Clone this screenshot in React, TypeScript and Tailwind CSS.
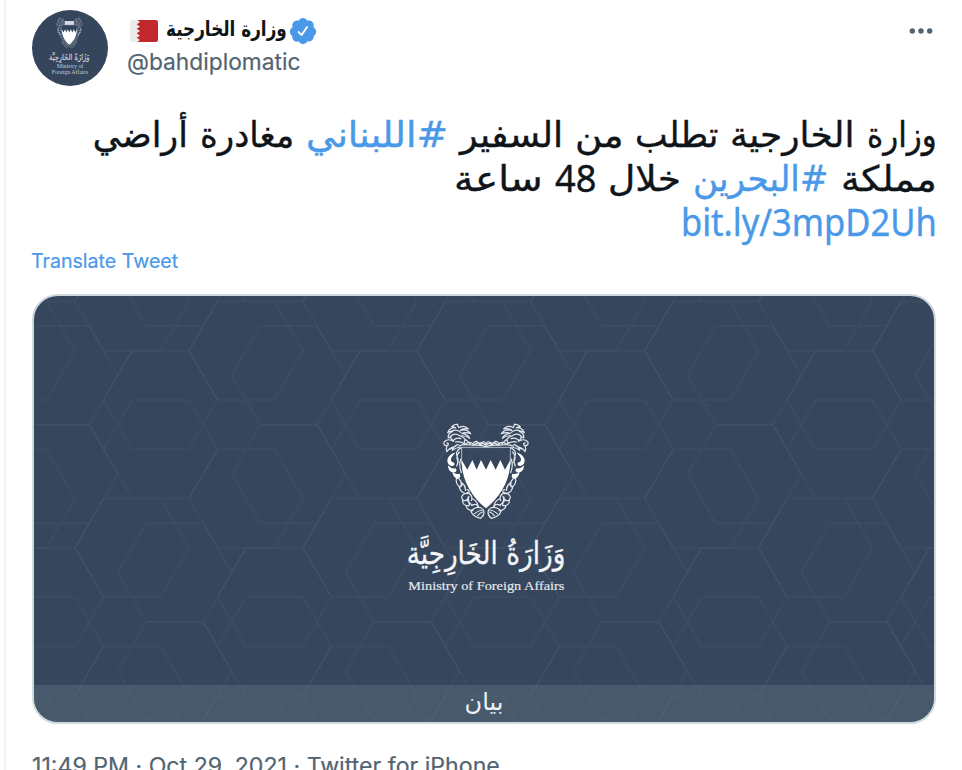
import { useLayoutEffect, useRef, useState } from 'react';
import clsx from 'clsx';

const BADGE_PATH =
  'M22.5 12.5c0-1.58-.875-2.95-2.148-3.6.154-.435.238-.905.238-1.4 0-2.21-1.71-3.998-3.818-3.998-.47 0-.92.084-1.336.25C14.818 2.415 13.51 1.5 12 1.5s-2.816.917-3.437 2.25c-.415-.165-.866-.25-1.336-.25-2.11 0-3.818 1.79-3.818 4 0 .494.083.964.237 1.4-1.272.65-2.147 2.018-2.147 3.6 0 1.495.782 2.798 1.942 3.486-.02.17-.032.34-.032.514 0 2.21 1.708 4 3.818 4 .47 0 .92-.086 1.335-.25.62 1.334 1.926 2.25 3.437 2.25 1.512 0 2.818-.916 3.437-2.25.415.163.865.248 1.336.248 2.11 0 3.818-1.79 3.818-4 0-.174-.012-.344-.033-.513 1.158-.687 1.943-1.99 1.943-3.484zm-6.616-3.334l-4.334 6.5c-.145.217-.382.334-.625.334-.143 0-.288-.04-.416-.126l-.115-.094-2.415-2.415c-.293-.293-.293-.768 0-1.06s.768-.294 1.06 0l1.77 1.767 3.825-5.74c.23-.345.696-.436 1.04-.207.346.23.44.696.21 1.04z';

// Hexagon motif on a grid of half-steps; it repeats every (16, 0) and (8, 8) cells
const CELL_W = 14.24;
const CELL_H = 24.64;

const FAINT: number[][] = [
  [12, 0, 18, 0], [-1, 1, 3, 1], [7, 1, 11, 1], [4, 2, 10, 2],
  [6, 4, 10, 4], [12, 4, 16, 4], [15, 5, 19, 5], [6, 6, 10, 6], [12, 6, 16, 6],
  [2, 0, 5, 3], [13, -1, 10, 2], [10, 0, 8, 2], [16, 0, 18, 2, 16, 4],
  [15, 1, 13, 3, 15, 5, 13, 7, 15, 9], [6, 2, 3, 5, 6, 8], [4, 4, 6, 6],
  [10, 2, 12, 4, 10, 6], [10, 4, 12, 6, 10, 8], [6, 4, 4, 6], [16, 6, 18, 8],
];

const BRIGHT: number[][] = [
  [3, 1, 4, 2], [12, 0, 10, 2, 12, 4], [12, 6, 10, 8], [4, 4, 6, 2],
  [3, 5, 5, 7], [15, 5, 19, 5], [6, 2, 8, 2],
];

const OFFSETS = [-1, 0, 1, 2].flatMap((row) =>
  [-2, -1, 0, 1, 2, 3, 4].map((col) => [col * 16 + (row % 2 === 0 ? 0 : 8), row * 8])
);

const toPath = (lines: number[][]) =>
  lines
    .map((pts) => {
      let d = '';
      for (let i = 0; i < pts.length; i += 2) {
        d += `${i === 0 ? 'M' : 'L'}${(pts[i] * CELL_W).toFixed(2)} ${(pts[i + 1] * CELL_H).toFixed(2)}`;
      }
      return d;
    })
    .join('');

function HexPattern() {
  return (
    <svg className="absolute inset-0" width="900" height="426" viewBox="34 296 900 426" fill="none">
      {OFFSETS.map(([x, y]) => (
        <g key={`${x}:${y}`} transform={`translate(${46.6 + x * CELL_W} ${301.4 + y * CELL_H})`}>
          <path d={toPath(FAINT)} stroke="#8c9bb2" strokeOpacity="0.075" strokeWidth="2" />
          <path d={toPath(BRIGHT)} stroke="#8c9bb2" strokeOpacity="0.065" strokeWidth="1.8" />
        </g>
      ))}
    </svg>
  );
}

// Left half of the mantling, mirrored for the right one
function Mantling() {
  return (
    <>
      <g strokeWidth="3.6">
        <path d="M202 44c-6-3-14 3-17 6 5-1 9 1 12 4-9-3-20 3-24 14 5-4 11-5 15-4-9 3-14 11-13 20l8-4c-1 6 2 10 8 12" />
        <path d="M202 42l4 11c12-7 23-3 29 4-9-2-18-1-24 4 12-3 24 1 31 10-10-4-19-4-27-1 10 1 20 6 24 15-9-7-19-9-29-7 7 2 13 6 16 11" />
        <path d="M184 64c12-7 20-5 28 3M181 79c9-8 19-8 28-2M190 91c7-7 14-8 22-5" />
        <path d="M190 94c-9-7-20-6-27 1-4 7 1 13 8 12 6-2 5-9-1-8M171 108c-3 6-3 12 0 17 5-9 15-13 24-15M177 118c11-2 18-9 27-15M196 107c-5 5-8 9-9 14 8-6 16-9 24-10" />
        <path d="M196 96c11-3 20 0 30 7 10-9 20-5 26 1 10-8 22-7 36 1M205 108c14-6 28-4 42-3 14 1 25-2 41 5M226 103c-5-5-4-10 1-14 5 3 8 9 13 12M248 106c1-8 6-12 13-12 2 6 7 9 13 10M270 103c3-6 8-9 14-7l4 9" />
        <path d="M214 113c-14 6-18 18-12 28 4 10 2 18-2 27M208 126c-9 10-9 20-3 31M212 147c-5 14-3 28 2 41" />
        <path d="M202 199c-5 10-4 22 5 30 8 2 11-5 7-9M207 207c8 6 8 14 5 24M207 229c3 13 12 22 25 22 8-2 7-12-1-12M216 219c9 7 11 14 10 22M224 251c-10 5-12 12-4 20 8 3 15-2 14-10M218 271c-1 10 6 17 18 16M228 286c1 10 8 15 21 16M242 302c4 12 12 20 30 23 10-8 12-18 7-27" />
        <path d="M231 247c13 5 17 14 13 25M237 259c-5 12 0 20 10 26M248 267c12 6 17 14 15 25M245 287c8-6 16-4 21 2M246 300c10-9 20-10 30-5M254 311c8-7 15-10 23-11M263 317c5-6 9-9 14-11M230 270c6 4 9 9 8 16" />
      </g>
      <g fill="#fff" stroke="none">
        <path d="M196 128c-14 2-22 12-24 22 0 11 6 18 15 18 7 0 9-8 3-11-8-1-9-10-3-18 3-5 7-8 9-11z" />
        <path d="M174 166c0 13 7 21 17 22 9-1 11-9 5-13-6 2-14-1-22-9zM187 186c2 12 8 19 16 21 8-2 10-10 5-16-5 2-13 1-21-5z" />
      </g>
    </>
  );
}

function Ornament() {
  return (
    <g fill="none" stroke="#e4e8ee" strokeLinecap="round" strokeLinejoin="round">
      <Mantling />
      <g transform="matrix(-1 0 0 1 576 0)">
        <Mantling />
      </g>
      <path d="M215 160V112H361V160" strokeWidth="3" strokeOpacity=".7" />
    </g>
  );
}

function Shield() {
  return (
    <path
      d="M215 150L232 179L247 150L260 179L273 150L288 179L302 150L317 179L331 150L345 179L361 150V163C357 215 330 262 288 295C246 262 219 215 215 163Z"
      fill="#fff"
    />
  );
}

function Wordmark() {
  return (
    <text
      x="288"
      y="398"
      direction="rtl"
      textAnchor="middle"
      fontSize="80"
      fill="#f3f5f8"
      stroke="#f3f5f8"
      strokeWidth=".8"
      textLength="476"
      lengthAdjust="spacingAndGlyphs"
      transform="scale(1 1.16)"
      className="font-['DejaVu_Sans',sans-serif]"
    >
      وَزَارَةُ الخَارِجِيَّة
    </text>
  );
}

function MinistryLogo() {
  return (
    <svg className="absolute left-[356px] top-[114px]" width="200" height="200" viewBox="0 0 600 600">
      <Ornament />
      <Shield />
      <Wordmark />
      <text
        x="55"
        y="541"
        fontSize="40"
        fill="#e6eaf0"
        stroke="#e6eaf0"
        strokeWidth=".5"
        textLength="468"
        lengthAdjust="spacingAndGlyphs"
        className="font-['Liberation_Serif',serif]"
      >
        Ministry of Foreign Affairs
      </text>
    </svg>
  );
}

function Avatar() {
  return (
    <svg className="size-[76px] shrink-0 rounded-full bg-[#35455c]" viewBox="0 0 228 228">
      <g transform="translate(22 10) scale(.3125 .32)">
        <g opacity=".5">
          <Ornament />
        </g>
        <Shield />
        <rect x="244" y="72" width="88" height="36" fill="#d5dae2" />
      </g>
      <g transform="translate(38.5 29) scale(.255 .26)" opacity=".85">
        <Wordmark />
      </g>
      <g fill="#c3cad5" fontSize="18" className="font-['Liberation_Serif',serif]">
        <text x="74" y="174" textLength="80" lengthAdjust="spacingAndGlyphs">Ministry of</text>
        <text x="59" y="193" textLength="109" lengthAdjust="spacingAndGlyphs">Foreign Affairs</text>
      </g>
    </svg>
  );
}

function BahrainFlag() {
  return (
    <svg width="28" height="22" viewBox="0 0 84 66">
      <rect width="84" height="66" rx="7" fill="#ececec" />
      <path
        d="M22 0H77a7 7 0 0 1 7 7V59a7 7 0 0 1-7 7H22L30 60 20 53 30 47 20 40 30 33 20 26 30 20 20 13 30 6Z"
        fill="#c1272d"
      />
    </svg>
  );
}

interface FitTextProps {
  text: string;
  width: number;
  className?: string;
}

// Stretches or condenses a run of text to an exact width
function FitText({ text, width, className }: FitTextProps) {
  const ref = useRef<HTMLSpanElement>(null);
  const [scale, setScale] = useState(1);

  useLayoutEffect(() => {
    if (ref.current) setScale(width / ref.current.offsetWidth);
  }, [text, width]);

  return (
    <span className={clsx('block shrink-0 whitespace-nowrap', className)} style={{ width }}>
      <span
        ref={ref}
        className="inline-block ltr:origin-left rtl:origin-right"
        style={{ transform: `scaleX(${scale})` }}
      >
        {text}
      </span>
    </span>
  );
}

interface Word {
  text: string;
  width: number;
  tag?: boolean;
  latin?: boolean;
}

const TWEET_LINES: Word[][] = [
  [
    { text: 'وزارة', width: 70 },
    { text: 'الخارجية', width: 125 },
    { text: 'تطلب', width: 83 },
    { text: 'من', width: 48 },
    { text: 'السفير', width: 103 },
    { text: '#اللبناني', width: 142, tag: true },
    { text: 'مغادرة', width: 94 },
    { text: 'أراضي', width: 95 },
  ],
  [
    { text: 'مملكة', width: 96 },
    { text: '#البحرين', width: 136, tag: true },
    { text: 'خلال', width: 73 },
    { text: '48', width: 41, latin: true },
    { text: 'ساعة', width: 89 },
  ],
  [{ text: 'bit.ly/3mpD2Uh', width: 256, tag: true, latin: true }],
];

export default function App() {
  return (
    <div className="h-[770px] w-[962px] overflow-hidden bg-white pl-1">
      <article className="h-full border-l-2 border-[#eff3f4] pl-[26px] pr-[26px] pt-2.5 font-[Inter,sans-serif]">
        <header className="flex items-start">
          <Avatar />
          <div className="ml-5 flex-1">
            <div className="flex h-[38px] items-center">
              <div className="ml-0.5 mt-1">
                <BahrainFlag />
              </div>
              <div dir="rtl" className="ml-2 mr-px">
                <FitText
                  text="وزارة الخارجية"
                  width={121}
                  className="font-['DejaVu_Sans',sans-serif] text-[21px] font-bold leading-6 text-[#0f1419]"
                />
              </div>
              <svg className="mt-1" width="30" height="30" viewBox="0 0 24 24" fill="#4a99e9">
                <path d={BADGE_PATH} />
              </svg>
            </div>
            <FitText
              text="@bahdiplomatic"
              width={173}
              className="-ml-px text-[23px] leading-7 text-[#536471] [-webkit-text-stroke:0.2px]"
            />
          </div>
          <svg className="mr-0.5 mt-[17px]" width="26" height="8" viewBox="0 0 26 8" fill="#536471">
            <circle cx="4.3" cy="4" r="2.7" />
            <circle cx="13" cy="4" r="2.7" />
            <circle cx="21.7" cy="4" r="2.7" />
          </svg>
        </header>

        <div
          dir="rtl"
          className="-mr-px mt-[27px] font-['DejaVu_Sans',sans-serif] text-[35px] leading-[44px] text-[#0f1419]"
        >
          {TWEET_LINES.map((words, i) => (
            <div key={i} className="flex h-11 gap-3">
              {words.map(({ text, width, tag, latin }) => (
                <FitText
                  key={text}
                  text={text}
                  width={width}
                  className={clsx(
                    '[-webkit-text-stroke:0.4px]',
                    tag && 'text-[#4a99e9]',
                    latin && "-mt-[2px] font-['Noto_Sans',sans-serif] text-[38px]"
                  )}
                />
              ))}
            </div>
          ))}
        </div>

        <FitText
          text="Translate Tweet"
          width={147}
          className="-ml-px mt-0.5 text-[20px] leading-7 text-[#4a99e9] [-webkit-text-stroke:0.2px]"
        />

        <div className="relative mt-[19px] h-[430px] w-[904px] overflow-hidden rounded-[26px] border-2 border-[#cfd9de] bg-[#36465c]">
          <HexPattern />
          <MinistryLogo />
          <div
            dir="rtl"
            className="absolute inset-x-0 bottom-0 h-[37px] bg-[#5f7080]/45 text-center font-['DejaVu_Sans',sans-serif] text-[24px] leading-[34px] text-[#eef1f8]"
          >
            بيان
          </div>
        </div>

        <FitText
          text="11:49 PM · Oct 29, 2021 · Twitter for iPhone"
          width={468}
          className="mt-[28px] text-[22.5px] leading-7 text-[#536471] [-webkit-text-stroke:0.2px]"
        />
      </article>
    </div>
  );
}
